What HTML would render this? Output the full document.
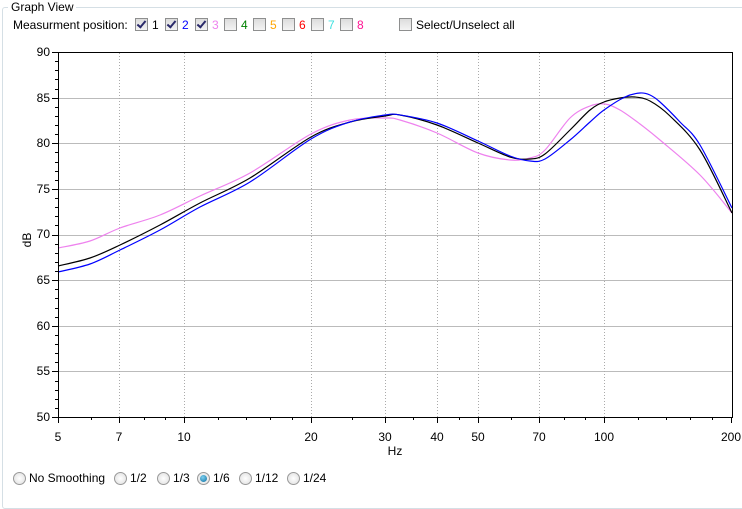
<!DOCTYPE html>
<html><head><meta charset="utf-8"><style>
body{margin:0;width:742px;height:486px;background:#fff;font-family:"Liberation Sans",sans-serif;font-size:12px;color:#000;position:relative;overflow:hidden}
.a{position:absolute;white-space:nowrap}
.cb{position:absolute;width:11px;height:11px;border:1px solid #8e8f8f;background:linear-gradient(#dcdcdc,#f4f4f4);top:18px}
.cb.c::after{content:"";position:absolute;left:3px;top:0px;width:3px;height:7px;border:solid #2a2a6a;border-width:0 2px 2px 0;transform:rotate(40deg)}
.rb{position:absolute;width:11px;height:11px;border:1px solid #999;border-radius:50%;background:radial-gradient(#fff,#ddd);top:472px}
.rb.s::after{content:"";position:absolute;left:2px;top:2px;width:7px;height:7px;border-radius:50%;background:radial-gradient(circle at 40% 35%,#7fd0f0,#0a6ea0)}
</style></head><body>
<div style="position:absolute;left:2px;top:7px;width:760px;height:500px;border:1px solid #d5dfe5;border-radius:3px"></div>
<div class="a" style="left:8px;top:0px;background:#fff;padding:0 3px">Graph View</div>
<div class="a" style="left:13px;top:18px">Measurment position:</div>
<div class="cb c" style="left:135px"></div><div class="a" style="left:152px;top:18px">1</div>
<div class="cb c" style="left:165px"></div><div class="a" style="left:182px;top:18px;color:#00f">2</div>
<div class="cb c" style="left:195px"></div><div class="a" style="left:212px;top:18px;color:#ee82ee">3</div>
<div class="cb" style="left:224px"></div><div class="a" style="left:241px;top:18px;color:#008000">4</div>
<div class="cb" style="left:253px"></div><div class="a" style="left:270px;top:18px;color:#ffa500">5</div>
<div class="cb" style="left:282px"></div><div class="a" style="left:299px;top:18px;color:#f00">6</div>
<div class="cb" style="left:311px"></div><div class="a" style="left:328px;top:18px;color:#40e0e0">7</div>
<div class="cb" style="left:340px"></div><div class="a" style="left:357px;top:18px;color:#ff1493">8</div>
<div class="cb" style="left:399px"></div><div class="a" style="left:416px;top:18px">Select/Unselect all</div>

<svg id="g" style="position:absolute;left:0;top:0" width="742" height="486" font-family="Liberation Sans" font-size="12">
<g id="grid"></g>
<path class="cv" fill="none" stroke="#ee82ee" stroke-width="1.2" data-p="58,248 90,241 120,228 160,215 200,196 250,173 311,134 350,120 385,118 400,120 437,133 478,153 510,160 530,158 545,150 570,118 590,106 605,104 620,110 640,124 660,140 700,175 732,213"/>
<path class="cv" fill="none" stroke="#000" stroke-width="1.2" data-p="58,266 90,258 120,245 160,225 200,203 250,178 311,137 350,122 385,116 400,115 437,125 478,143 510,157 530,159 545,154 570,130 590,110 604,102 620,98 635,97 650,101 670,116 700,150 732,213"/>
<path class="cv" fill="none" stroke="#00f" stroke-width="1.2" data-p="58,272 90,264 120,250 160,230 200,207 250,182 311,139 350,122 385,115 400,115 437,123 478,141 510,156 530,161 545,159 570,140 590,122 604,110 625,97 640,93 650,95 660,102 680,122 700,145 732,208"/>
<rect x="58.5" y="52.5" width="674" height="365" fill="none" stroke="#000"/>
<g text-anchor="end">
<text x="50" y="56">90</text><text x="50" y="102">85</text><text x="50" y="147">80</text><text x="50" y="193">75</text><text x="50" y="238">70</text><text x="50" y="284">65</text><text x="50" y="330">60</text><text x="50" y="375">55</text><text x="50" y="421">50</text>
</g>
<text x="0" y="0" transform="translate(31,240) rotate(-90)" text-anchor="middle">dB</text>
<g text-anchor="middle">
<text x="58" y="441">5</text><text x="119" y="441">7</text><text x="184" y="441">10</text><text x="311" y="441">20</text><text x="385" y="441">30</text><text x="437" y="441">40</text><text x="478" y="441">50</text><text x="539" y="441">70</text><text x="604" y="441">100</text><text x="731" y="441">200</text>
<text x="395" y="455">Hz</text>
</g>
</svg>
<div class="rb" style="left:13px"></div><div class="a" style="left:29px;top:471px">No Smoothing</div>
<div class="rb" style="left:114px"></div><div class="a" style="left:130px;top:471px">1/2</div>
<div class="rb" style="left:157px"></div><div class="a" style="left:173px;top:471px">1/3</div>
<div class="rb s" style="left:197px"></div><div class="a" style="left:213px;top:471px">1/6</div>
<div class="rb" style="left:239px"></div><div class="a" style="left:255px;top:471px">1/12</div>
<div class="rb" style="left:287px"></div><div class="a" style="left:303px;top:471px">1/24</div>
<script>
var g=document.getElementById('grid'),s='';
function X(f){return 58+420*Math.log10(f/5);}
function Y(d){return 417-(d-50)*9.125;}
for(var d=55;d<90;d+=5){var y=Math.round(Y(d))+.5;s+='<line x1="58" x2="732" y1="'+y+'" y2="'+y+'" stroke="#bbb"/>';}
[7,10,20,30,40,50,70,100].forEach(function(f){var x=Math.round(X(f))+.5;s+='<line x1="'+x+'" x2="'+x+'" y1="53" y2="417" stroke="#aaa" stroke-dasharray="1,2"/>';});
[5,7,10,20,30,40,50,70,100,200].forEach(function(f){var x=Math.round(X(f))+.5;s+='<line x1="'+x+'" x2="'+x+'" y1="417" y2="423" stroke="#000"/>';});
[6,8,9,12,14,16,18,25,35,45,60,80,90,120,140,160,180].forEach(function(f){var x=Math.round(X(f))+.5;s+='<line x1="'+x+'" x2="'+x+'" y1="417" y2="420" stroke="#000"/>';});
for(var d=50;d<=90;d++){var y=Math.round(Y(d))+.5;s+='<line x1="'+(d%5?55:52)+'" x2="58" y1="'+y+'" y2="'+y+'" stroke="#000"/>';}
g.innerHTML=s;
document.querySelectorAll('.cv').forEach(function(el){
var p=el.getAttribute('data-p').split(' ').map(function(t){return t.split(',').map(Number);});
var d='M'+p[0][0]+','+p[0][1];
for(var i=0;i<p.length-1;i++){var p0=p[i-1]||p[i],p1=p[i],p2=p[i+1],p3=p[i+2]||p2;
d+=' C'+(p1[0]+(p2[0]-p0[0])/6)+','+(p1[1]+(p2[1]-p0[1])/6)+' '+(p2[0]-(p3[0]-p1[0])/6)+','+(p2[1]-(p3[1]-p1[1])/6)+' '+p2[0]+','+p2[1];}
el.setAttribute('d',d);});
</script>
</body></html>
